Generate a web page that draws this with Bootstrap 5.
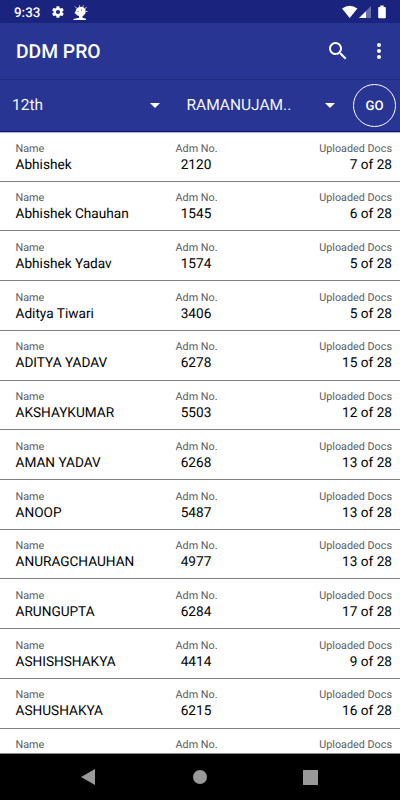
<!DOCTYPE html>
<html lang="en">
<head>
<meta charset="utf-8">
<meta name="viewport" content="width=device-width, initial-scale=1">
<title>DDM PRO</title>
<link href="https://cdn.jsdelivr.net/npm/bootstrap@5.3.0/dist/css/bootstrap.min.css" rel="stylesheet">
<style>
body{font-family:Roboto,"Liberation Sans",sans-serif;height:800px;overflow:hidden;color:#000;background:#fff;text-rendering:geometricPrecision}
svg{display:block;flex:none}
.status-bar{height:23px;background:#1a237e;padding:0 13px 0 14px}
.clock{font-size:13.4px;font-weight:500;line-height:23px;width:37px;margin-top:3px}
.app-bar{height:56px;background:#283593;padding:0 13px 0 16px}
.app-title{font-size:19.3px;font-weight:500;line-height:54px;padding-top:2px}
.filter-bar{height:53px;background:#283593;border-top:1px solid #232c7c;border-bottom:1px solid #0a0f80;padding:0 4px 0 12px;box-shadow:0 1px 1px #0004;z-index:1;position:relative}
.picker{font-size:15.5px;background:none;border:0;padding:0;color:#f4f5fb;text-rendering:inherit}
.picker-class{width:148px}
.picker-section{width:148.500px;margin-left:26.500px}
.go-btn{width:43px;height:43px;border:1px solid #fff;color:#fff;font-size:13.2px;font-weight:500;padding:2px 0 0;margin-left:auto;text-rendering:inherit}
.doc-list{height:622px;overflow:hidden;border-bottom:1px solid #888}
.doc-row{height:49.72px;border-bottom:1px solid #808080;padding:7.5px 8px 0 15.500px;display:grid;grid-template-columns:160px 41px 1fr}
.field-label{font-size:10.8px;line-height:17px;color:#5c5c5c;white-space:nowrap}
.field-value{font-size:13.65px;line-height:17.400px;white-space:nowrap}
.system-nav{height:46px;background:#000;padding:0 82px 0 81px}
.home-key{margin-left:1px}
</style>
</head>
<body class="d-flex flex-column">
<header class="text-white">
  <div class="status-bar d-flex align-items-center">
    <span class="clock">9:33</span>
    <svg width="14" height="14" viewBox="0 0 24 24" fill="#fff"><path fill-rule="evenodd" d="M19.4 13a7.500 7.500 0 0 0 0-2l2.100-1.600c.2-.2.2-.5.100-.7l-2-3.400c-.1-.2-.4-.3-.6-.2l-2.500 1a7.300 7.300 0 0 0-1.700-1l-.4-2.600a.5.500 0 0 0-.5-.5h-4a.5.500 0 0 0-.5.500L9 5.100a8 8 0 0 0-1.700 1l-2.500-1c-.2-.1-.5 0-.6.200l-2 3.400c-.1.200-.1.500.1.700L4.500 11a8 8 0 0 0 0 2l-2.200 1.600c-.2.200-.2.500-.1.700l2 3.400c.1.200.4.300.6.200l2.500-1c.5.400 1.100.8 1.700 1l.4 2.600c0 .3.200.5.500.5h4c.3 0 .5-.2.5-.5l.4-2.600a8 8 0 0 0 1.700-1l2.500 1c.2.100.5 0 .6-.2l2-3.400c.1-.2.1-.5-.1-.7zM12 15.600A3.600 3.600 0 1 1 12 8.400a3.600 3.600 0 0 1 0 7.200z"/></svg>
    <svg width="15" height="16" viewBox="0 0 15 16" fill="#fff" class="ms-2"><path d="M3.500 4.500 5.500 3.200 8 2.700 11 3.500 12.500 5.500 12.500 9 11 11.300 9.500 12v1.700l3.500 1.100V16H.5v-1l5.500-1.300V12L3.800 11.300 3 10 1.500 9.200 2.500 7.500z"/><path d="M3.500 4 2 2.500M6.500 2.800V1.300M9.500 3l1-1.500M12 4.500l1.500-1M12.500 7.500h2" stroke="#fff" stroke-width=".8"/><circle cx="5" cy="7.200" r=".5" fill="#1a237e"/><circle cx="8.500" cy="6" r=".5" fill="#1a237e"/></svg>
    <svg class="ms-auto" width="47" height="16" viewBox="0 0 47 16" fill="#fff"><path d="M2 4.600Q9.700-1 17.400 4.600L9.700 14z"/><path d="M31 2v12H19z" opacity=".35"/><path d="M26 7.300V14h-7z"/><path d="M39 3h1.300V1.500h3.400V3H45a.8.800 0 0 1 .8.800v9.700a.8.800 0 0 1-.8.800h-6a.8.800 0 0 1-.8-.8V3.800A.8.800 0 0 1 39 3z"/></svg>
  </div>
  <div class="app-bar d-flex align-items-center">
    <h1 class="app-title m-0">DDM PRO</h1>
    <svg class="ms-auto" width="24" height="24" viewBox="0 0 24 24" fill="#fff"><path d="M15.500 14h-.79l-.28-.27A6.500 6.500 0 1 0 13.730 14.430l.27.28v.79l5 4.990L20.490 19zm-6 0a4.500 4.500 0 1 1 0-9 4.500 4.500 0 0 1 0 9z"/></svg>
    <svg width="16" height="24" viewBox="0 0 16 24" fill="#fff" style="margin-left:21px"><circle cx="8" cy="6" r="2"/><circle cx="8" cy="12" r="2"/><circle cx="8" cy="18" r="2"/></svg>
  </div>
  <div class="filter-bar d-flex align-items-center">
    <button class="picker picker-class d-flex align-items-center justify-content-between">12th<svg width="10" height="5" viewBox="0 0 10 5"><path d="M0 0h10L5 5z" fill="#fff"/></svg></button>
    <button class="picker picker-section d-flex align-items-center justify-content-between">RAMANUJAM..<svg width="10" height="5" viewBox="0 0 10 5"><path d="M0 0h10L5 5z" fill="#fff"/></svg></button>
    <button class="go-btn btn rounded-circle">GO</button>
  </div>
</header>
<main class="doc-list" id="docs"></main>
<nav class="system-nav d-flex align-items-center justify-content-between">
  <svg width="14" height="16" viewBox="0 0 14 16"><path d="M0 8 14 0v16z" fill="#999"/></svg>
  <svg class="home-key" width="14" height="14" viewBox="0 0 14 14"><circle cx="7" cy="7" r="7" fill="#999"/></svg>
  <svg width="15" height="15" viewBox="0 0 15 15"><rect width="15" height="15" rx=".6" fill="#999"/></svg>
</nav>
<script src="https://cdn.jsdelivr.net/npm/bootstrap@5.3.0/dist/js/bootstrap.bundle.min.js"></script>
<script>
const students = [
  ["Abhishek","2120",7],["Abhishek Chauhan","1545",6],["Abhishek Yadav","1574",5],
  ["Aditya Tiwari","3406",5],["ADITYA YADAV","6278",15],["AKSHAYKUMAR","5503",12],
  ["AMAN YADAV","6268",13],["ANOOP","5487",13],["ANURAGCHAUHAN","4977",13],
  ["ARUNGUPTA","6284",17],["ASHISHSHAKYA","4414",9],["ASHUSHAKYA","6215",16],["","",null]
];
document.getElementById("docs").innerHTML = students.map(([name, adm, n]) => `
  <div class="doc-row">
    <div><div class="field-label">Name</div><div class="field-value">${name}</div></div>
    <div class="text-center"><div class="field-label">Adm No.</div><div class="field-value">${adm}</div></div>
    <div class="text-end"><div class="field-label">Uploaded Docs</div><div class="field-value">${n === null ? "" : n + " of 28"}</div></div>
  </div>`).join("");
</script>
</body>
</html>
